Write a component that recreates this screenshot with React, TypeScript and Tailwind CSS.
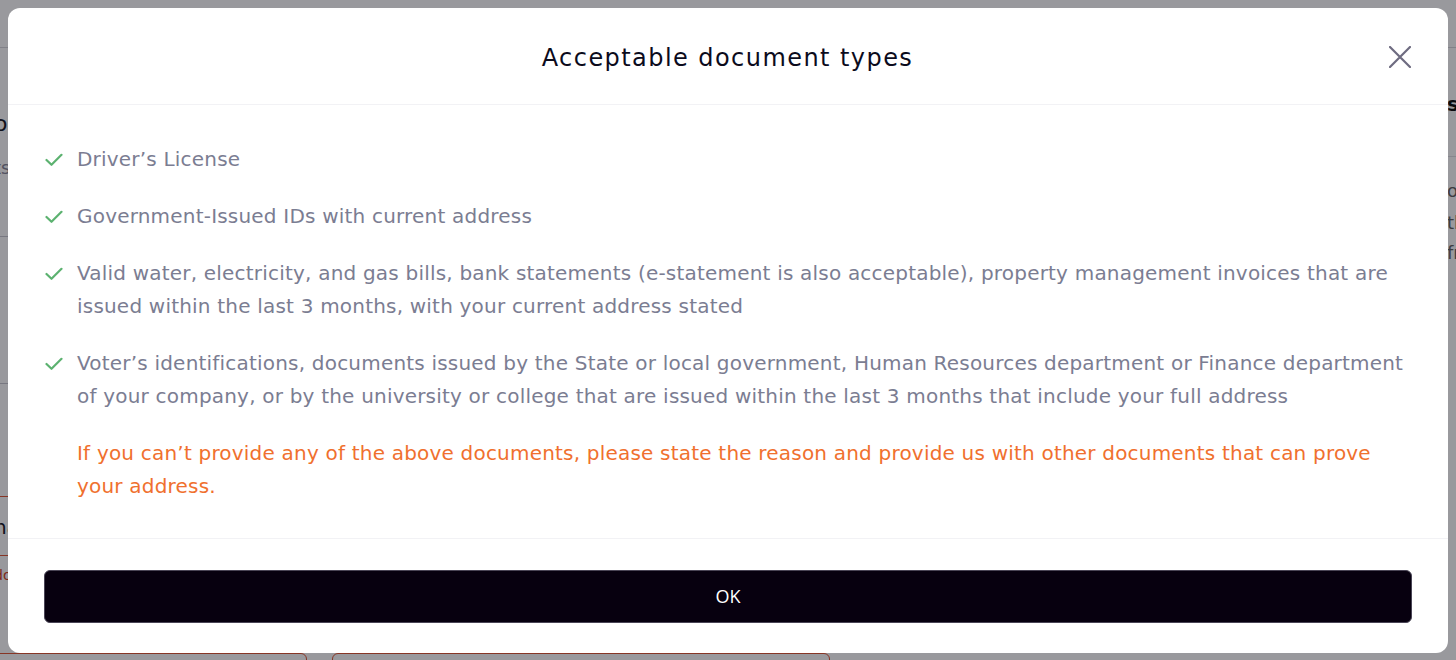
import React from "react";

const DOCUMENTS = [
  "Driver\u2019s License",
  "Government-Issued IDs with current address",
  "Valid water, electricity, and gas bills, bank statements (e-statement is also acceptable), property management invoices that are issued within the last 3 months, with your current address stated",
  "Voter\u2019s identifications, documents issued by the State or local government, Human Resources department or Finance department of your company, or by the university or college that are issued within the last 3 months that include your full address",
];

function CheckIcon() {
  return (
    <svg width="18" height="14" viewBox="0 0 18 14" fill="none" className="mt-[10px] shrink-0">
      <path
        d="M1.5 7 L6.5 11.8 L16.5 1.8"
        stroke="#5cb270"
        strokeWidth="2.2"
        strokeLinecap="round"
        strokeLinejoin="round"
      />
    </svg>
  );
}

function CloseIcon() {
  return (
    <svg width="22" height="22" viewBox="0 0 22 22" fill="none">
      <path d="M1 1 L21 21 M21 1 L1 21" stroke="#6e6b80" strokeWidth="2.2" strokeLinecap="round" />
    </svg>
  );
}

function BackgroundPage() {
  return (
    <div className="h-[660px] overflow-hidden bg-white font-['DejaVu_Sans',sans-serif]">
      <div className="h-[48px] border-b border-[#d8d8dc]" />
      <div className="flex">
        <div className="-ml-[6px] flex w-[900px] shrink-0 flex-col">
          <p className="mt-[62px] text-[22px] leading-[28px] text-[#1c1c28]">ocument</p>
          <p className="mt-[18px] text-[18px] leading-[24px] text-[#888899]">ts</p>
          <div className="mt-[56px] h-px w-[300px] bg-[#c8c8d0]" />
          <div className="mt-[146px] h-px w-[300px] bg-[#c8c8d0]" />
          <div className="mt-[112px] h-px w-[300px] bg-[#e25b3a]" />
          <p className="mt-[18px] text-[20px] leading-[24px] text-[#1c1c28]">name</p>
          <div className="mt-[16px] h-px w-[300px] bg-[#e25b3a]" />
          <p className="mt-[10px] text-[14px] leading-[18px] text-[#d0482a]">document</p>
          <div className="mt-[69px] flex gap-[25px]">
            <div className="h-[30px] w-[313px] shrink-0 rounded-md border border-[#e25b3a]" />
            <div className="h-[30px] w-[498px] shrink-0 rounded-md border border-[#e25b3a]" />
          </div>
        </div>
        <div className="ml-auto flex w-[9px] shrink-0 flex-col">
          <p className="mt-[44px] text-[20px] font-bold leading-[24px] text-[#111]">s</p>
          <div className="mt-[40px] h-px w-[40px] bg-[#e0e0e4]" />
          <p className="mt-[22px] text-[18px] leading-[24px] text-[#666]">o</p>
          <p className="mt-[8px] text-[18px] leading-[24px] text-[#666]">th</p>
          <p className="mt-[6px] text-[18px] leading-[24px] text-[#666]">fr</p>
        </div>
      </div>
    </div>
  );
}

export default function App() {
  return (
    <div className="relative h-[660px] w-[1456px] overflow-hidden">
      <BackgroundPage />
      <div className="absolute inset-0 bg-[#00000a]/40 p-2">
        <div className="flex h-[645px] w-[1440px] flex-col rounded-xl bg-white font-['DejaVu_Sans',sans-serif]">
          <div className="grid h-[97px] shrink-0 grid-cols-[1fr_auto_1fr] items-center border-b border-[#f2f2f5] pl-9 pr-[37px]">
            <div />
            <h2 className="pt-1 text-[24px] font-normal tracking-[0.06em] text-[#0b0b1c]">
              Acceptable document types
            </h2>
            <button className="justify-self-end pt-[2px]">
              <CloseIcon />
            </button>
          </div>
          <div className="flex flex-1 flex-col gap-6 px-9 pt-[38px] text-[20px] leading-[33px] tracking-[0.2px]">
            {DOCUMENTS.map((doc) => (
              <div key={doc} className="flex items-start gap-[14px] pl-[1px]">
                <CheckIcon />
                <p className="text-[#7b7d92]">{doc}</p>
              </div>
            ))}
            <p className="pl-[33px] text-[#f0702e]">
              If you can&rsquo;t provide any of the above documents, please state the reason and
              provide us with other documents that can prove your address.
            </p>
          </div>
          <div className="flex h-[115px] shrink-0 items-start border-t border-[#f2f2f5] px-9 pt-[31px]">
            <button className="flex h-[53px] w-full items-center justify-center rounded-md border border-[#4a4556] bg-[#07000f] font-['Open_Sans',sans-serif] text-[18px] text-white">
              OK
            </button>
          </div>
        </div>
      </div>
    </div>
  );
}
